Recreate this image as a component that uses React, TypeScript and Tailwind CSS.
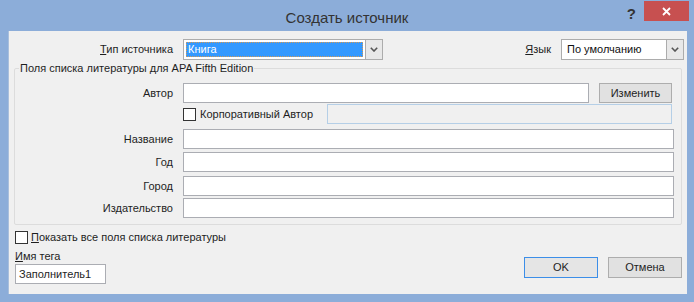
import React from 'react'

const font = { fontFamily: '"Liberation Sans", Arial, sans-serif' }

function Chevron() {
  return (
    <svg width="8" height="5" viewBox="0 0 8 5" className="block">
      <polyline points="0.8,0.8 4,4 7.2,0.8" fill="none" stroke="#555" strokeWidth="1.6" />
    </svg>
  )
}

function Combo({ text, selected, width }: { text: string; selected?: boolean; width: string }) {
  return (
    <div className={`flex h-[21px] ${width} border border-[#acacac] bg-white`}>
      <div className="flex flex-1 items-stretch p-[2px]">
        {selected ? (
          <div className="flex flex-1 items-center border border-dotted border-[#d59a55] bg-[#3399ff] pl-[1px] text-white">
            {text}
          </div>
        ) : (
          <div className="flex flex-1 items-center pl-[3px] text-[#111]">{text}</div>
        )}
      </div>
      <div className="flex w-[17px] items-center justify-center border-l border-[#acacac] bg-[#e8e8e8]">
        <Chevron />
      </div>
    </div>
  )
}

function Input({ width, value, disabled }: { width: string; value?: string; disabled?: boolean }) {
  return (
    <div
      className={`flex h-[20px] ${width} items-center border pl-[3px] ${
        disabled ? 'border-[#b5cfe7] bg-[#f0f0f0]' : 'border-[#abadb3] bg-white'
      }`}
    >
      {value}
    </div>
  )
}

function Check() {
  return <div className="h-[13px] w-[13px] border border-[#333] bg-white" />
}

function FieldRow({ label, className = '' }: { label: string; className?: string }) {
  return (
    <div className={`flex items-center ${className}`}>
      <div className="w-[158px] text-right">{label}</div>
      <div className="ml-[10px]">
        <Input width="w-[491px]" />
      </div>
    </div>
  )
}

export default function App() {
  return (
    <div style={font} className="flex h-[302px] w-[694px] flex-col bg-[#8cadd9] text-[11px] text-[#1e1e1e]">
      {/* title bar */}
      <div className="grid h-[31px] grid-cols-[1fr_auto_1fr]">
        <div />
        <div className="pt-[7px] text-[15px] text-[#333]">Создать источник</div>
        <div className="flex items-start justify-end pr-[5px]">
          <div className="mt-[3px] mr-[8px] text-[15px] font-bold text-[#333]">?</div>
          <div className="mt-[1px] flex h-[20px] w-[45px] items-center justify-center bg-[#c75050]">
            <svg width="9" height="9" viewBox="0 0 9 9">
              <path d="M1 1 L8 8 M8 1 L1 8" stroke="#fff" strokeWidth="1.8" />
            </svg>
          </div>
        </div>
      </div>

      {/* client area */}
      <div className="ml-[8px] mr-[7px] flex h-[263px] flex-col border-l border-[#a9bfdc] bg-[#f0f0f0]">
        <div className="mt-[8px] flex items-center pr-[3px]">
          <div className="w-[164px] text-right">
            <span className="underline">Т</span>ип источника
          </div>
          <div className="ml-[10px]">
            <Combo text="Книга" selected width="w-[200px]" />
          </div>
          <div className="flex-1 pr-[10px] text-right">
            <span className="underline">Я</span>зык
          </div>
          <Combo text="По умолчанию" width="w-[123px]" />
        </div>

        <fieldset className="mt-[1px] ml-[5px] w-[668px] rounded-[2px] border border-[#dcdcdc] pb-[6px]">
          <legend className="ml-[4px] px-[1px] leading-[15px]">Поля списка литературы для APA Fifth Edition</legend>
          <div className="mt-[7px] flex items-center">
            <div className="w-[158px] text-right">Автор</div>
            <div className="ml-[10px]">
              <Input width="w-[406px]" />
            </div>
            <div className="ml-[10px] flex h-[20px] w-[73px] items-center justify-center border border-[#adadad] bg-[#e1e1e1]">
              Изменить
            </div>
          </div>
          <div className="mt-[1px] flex items-center">
            <div className="ml-[168px]">
              <Check />
            </div>
            <div className="ml-[4px] w-[127px]">Корпоративный Автор</div>
            <Input width="w-[345px]" disabled />
          </div>
          <FieldRow label="Название" className="mt-[5px]" />
          <FieldRow label="Год" className="mt-[3px]" />
          <FieldRow label="Город" className="mt-[4px]" />
          <FieldRow label="Издательство" className="mt-[2px]" />
        </fieldset>

        <div className="flex flex-1 items-end justify-between pr-[5px] pb-[10px] pl-[6px]">
          <div className="flex flex-col">
            <div className="flex h-[13px] items-center">
              <Check />
              <div className="ml-[3px]">
                <span className="underline">П</span>оказать все поля списка литературы
              </div>
            </div>
            <div className="mt-[5px] h-[14px] leading-[14px]">
              <span className="underline">И</span>мя тега
            </div>
            <div className="mt-[1px]">
              <Input width="w-[91px]" value="Заполнитель1" />
            </div>
          </div>
          <div className="mb-[6px] flex gap-[10px]">
            <div className="flex h-[21px] w-[74px] items-center justify-center border border-[#3c8ee8] bg-[#e5e5e5]">
              OK
            </div>
            <div className="flex h-[21px] w-[74px] items-center justify-center border border-[#adadad] bg-[#e1e1e1]">
              Отмена
            </div>
          </div>
        </div>
      </div>
    </div>
  )
}
